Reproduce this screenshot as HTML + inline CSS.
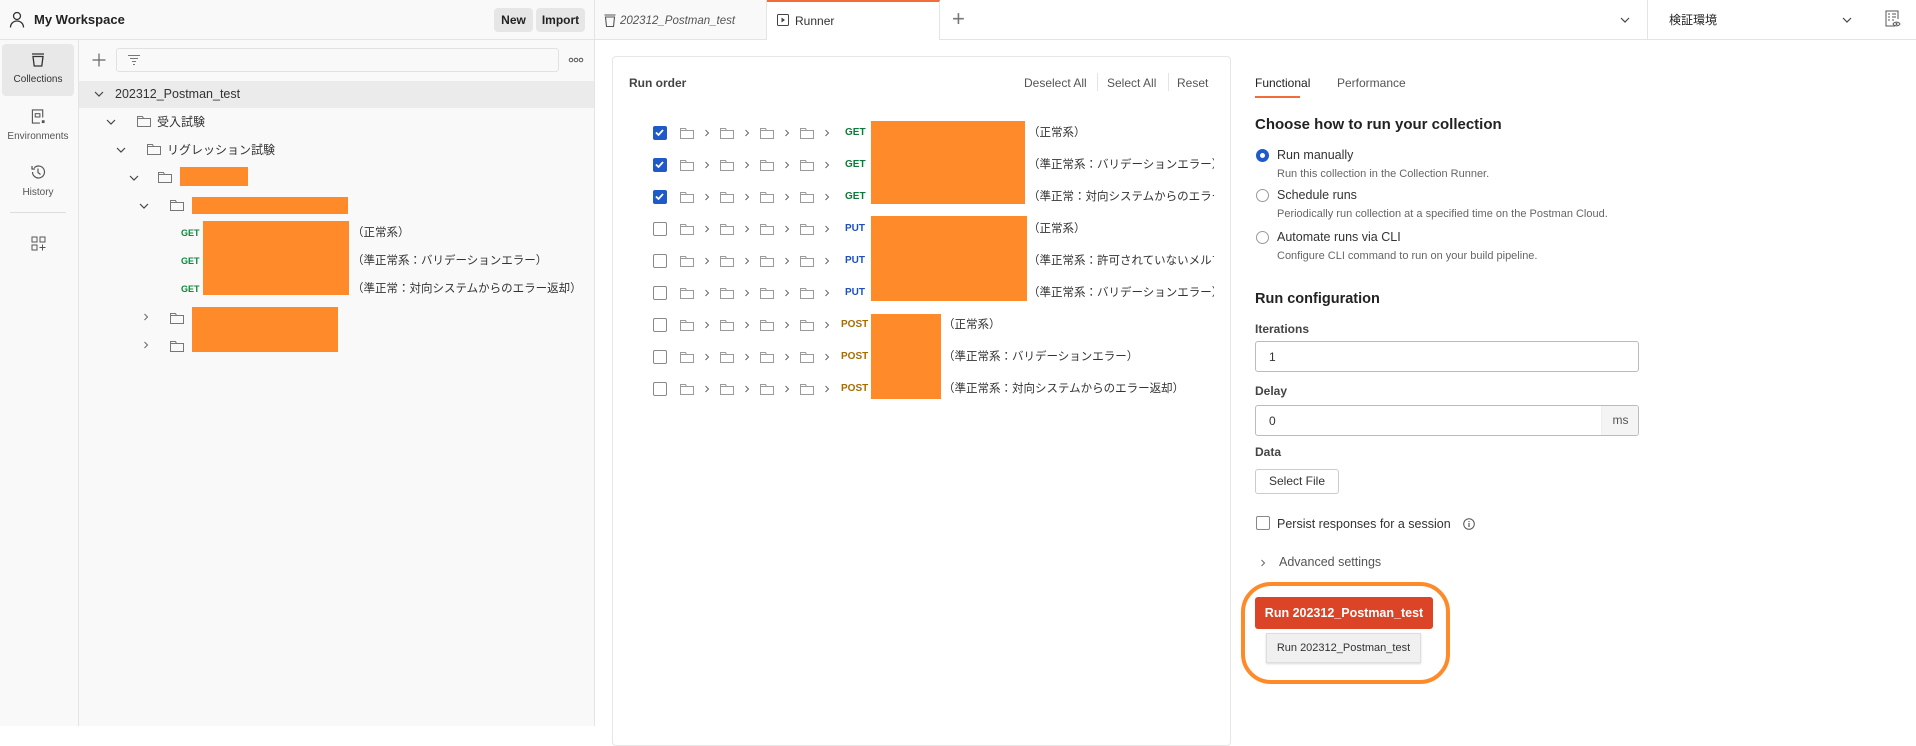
<!DOCTYPE html>
<html><head><meta charset="utf-8"><style>
*{margin:0;padding:0;box-sizing:border-box}
body{width:1916px;height:726px;overflow:hidden;background:#fff;font-family:"Liberation Sans","Noto Sans CJK JP",sans-serif;color:#212121;position:relative}
.a{position:absolute;white-space:nowrap}
.t{line-height:16px}
.or{position:absolute;background:#ff8a2a}
.fold{position:absolute;width:14px;height:12px}
.chev{position:absolute;width:8px;height:8px}
.g{color:#0a8a3a;font-weight:bold;font-size:9px}
.gm{color:#0a7a3a;font-weight:bold;font-size:10px}
.pu{color:#1c4fc0;font-weight:bold;font-size:10px}
.po{color:#a86b00;font-weight:bold;font-size:10px}
.cb{position:absolute;width:14px;height:14px;border:1.5px solid #8a8a8a;border-radius:2px;background:#fff}
.cb.on{background:#2059c8;border-color:#2059c8}
.jp{font-size:11.5px;color:#333}
</style></head><body>
<svg width="0" height="0" style="position:absolute"><defs>
<symbol id="f" viewBox="0 0 14 12"><path d="M0.5 1.5v10h13v-8h-7l-1-2z M0.5 3.5h13" fill="none" stroke="#777" stroke-width="1"/></symbol>
<symbol id="fl" viewBox="0 0 14 12"><path d="M0.5 1.5v10h13v-8h-7l-1-2z M0.5 3.5h13" fill="none" stroke="#9a9a9a" stroke-width="1"/></symbol>
<symbol id="cr" viewBox="0 0 8 8"><path d="M2.5 1l3 3-3 3" fill="none" stroke="#666" stroke-width="1"/></symbol>
<symbol id="cd" viewBox="0 0 10 8"><path d="M1 2l4 4 4-4" fill="none" stroke="#444" stroke-width="1.2"/></symbol>
</defs></svg>

<!-- sidebar -->
<div class="a" style="left:0;top:0;width:595px;height:726px;background:#f9f9f9;border-right:1px solid #e4e4e4"></div>
<div class="a" style="left:0;top:39px;width:595px;height:1px;background:#e4e4e4"></div>
<div class="a" style="left:78px;top:40px;width:1px;height:686px;background:#e4e4e4"></div>
<svg class="a" style="left:9px;top:11px" width="16" height="17" viewBox="0 0 16 17"><circle cx="8" cy="5" r="3.5" fill="none" stroke="#333" stroke-width="1.3"/><path d="M1.5 16.5c0-4 3-6.5 6.5-6.5s6.5 2.5 6.5 6.5" fill="none" stroke="#333" stroke-width="1.3"/></svg>
<div class="a t" style="left:34px;top:12px;font-size:13px;font-weight:bold;color:#222">My Workspace</div>
<div class="a" style="left:494px;top:8px;width:39px;height:24px;background:#e6e6e6;border-radius:4px;font-size:12px;font-weight:bold;line-height:24px;text-align:center;color:#222">New</div>
<div class="a" style="left:536px;top:8px;width:49px;height:24px;background:#e6e6e6;border-radius:4px;font-size:12px;font-weight:bold;line-height:24px;text-align:center;color:#222">Import</div>

<div class="a" style="left:2px;top:44px;width:72px;height:52px;background:#e8e8e8;border-radius:4px"></div>
<svg class="a" style="left:31px;top:53px" width="14" height="14" viewBox="0 0 14 14"><path d="M1 1h12M2 3.5h10l-1.2 9.5H3.2z" fill="none" stroke="#333" stroke-width="1.3"/></svg>
<div class="a t" style="left:0;width:76px;text-align:center;top:72px;font-size:10px;color:#333">Collections</div>
<svg class="a" style="left:31px;top:109px" width="15" height="15" viewBox="0 0 15 16"><path d="M12 9V1H1v14h8" fill="none" stroke="#555" stroke-width="1.2"/><rect x="4" y="5" width="5" height="3.5" fill="none" stroke="#555" stroke-width="1.1"/><rect x="11" y="12" width="3" height="3" fill="#555"/></svg>
<div class="a t" style="left:0;width:76px;text-align:center;top:129px;font-size:10px;color:#555">Environments</div>
<svg class="a" style="left:30px;top:164px" width="16" height="16" viewBox="0 0 16 16"><path d="M2.5 8a6 6 0 1 0 1.8-4.3" fill="none" stroke="#555" stroke-width="1.2"/><path d="M2 2v3h3M8 4.5v4l2.5 2" fill="none" stroke="#555" stroke-width="1.2"/></svg>
<div class="a t" style="left:0;width:76px;text-align:center;top:185px;font-size:10px;color:#555">History</div>
<div class="a" style="left:10px;top:212px;width:56px;height:1px;background:#ddd"></div>
<svg class="a" style="left:31px;top:236px" width="15" height="15" viewBox="0 0 15 15"><rect x="1" y="1" width="5" height="5" fill="none" stroke="#555"/><rect x="9" y="1" width="5" height="5" fill="none" stroke="#555"/><rect x="1" y="9" width="5" height="5" fill="none" stroke="#555"/><path d="M11.5 8.5v6M8.5 11.5h6" stroke="#555"/></svg>

<svg class="a" style="left:92px;top:53px" width="14" height="14" viewBox="0 0 14 14"><path d="M7 0.5v13M0.5 7h13" stroke="#666" stroke-width="1.2"/></svg>
<div class="a" style="left:116px;top:48px;width:443px;height:24px;border:1px solid #e2e2e2;border-radius:3px;background:#f9f9f9"></div>
<svg class="a" style="left:127px;top:54px" width="14" height="12" viewBox="0 0 14 12"><path d="M1 1.5h12M3 4.5h8M5 7.5h4M6 10.5h2" stroke="#777"/></svg>
<svg class="a" style="left:568px;top:57px" width="16" height="6" viewBox="0 0 16 6"><circle cx="3" cy="3" r="1.8" fill="none" stroke="#555"/><circle cx="8" cy="3" r="1.8" fill="none" stroke="#555"/><circle cx="13" cy="3" r="1.8" fill="none" stroke="#555"/></svg>

<div class="a" style="left:79px;top:81px;width:515px;height:27px;background:#ebebeb"></div>
<svg class="a" style="left:94px;top:90px" width="10" height="8"><use href="#cd"/></svg>
<div class="a t" style="left:115px;top:86px;font-size:12.5px;color:#333">202312_Postman_test</div>

<svg class="a" style="left:106px;top:118px" width="10" height="8"><use href="#cd"/></svg>
<svg class="fold" style="left:137px;top:115px"><use href="#f"/></svg>
<div class="a t jp" style="left:157px;top:114px;font-size:12px">受入試験</div>

<svg class="a" style="left:116px;top:146px" width="10" height="8"><use href="#cd"/></svg>
<svg class="fold" style="left:147px;top:143px"><use href="#f"/></svg>
<div class="a t jp" style="left:167px;top:142px;font-size:12px">リグレッション試験</div>

<svg class="a" style="left:129px;top:174px" width="10" height="8"><use href="#cd"/></svg>
<svg class="fold" style="left:158px;top:171px"><use href="#f"/></svg>
<div class="or" style="left:180px;top:167px;width:68px;height:19px"></div>

<svg class="a" style="left:139px;top:202px" width="10" height="8"><use href="#cd"/></svg>
<svg class="fold" style="left:170px;top:199px"><use href="#f"/></svg>
<div class="or" style="left:192px;top:197px;width:156px;height:17px"></div>

<div class="a t g" style="left:181px;top:225px">GET</div>
<div class="a t g" style="left:181px;top:253px">GET</div>
<div class="a t g" style="left:181px;top:281px">GET</div>
<div class="or" style="left:203px;top:221px;width:146px;height:74px"></div>
<div class="a t jp" style="left:352px;top:225px">（正常系）</div>
<div class="a t jp" style="left:352px;top:253px">（準正常系：バリデーションエラー）</div>
<div class="a t jp" style="left:352px;top:281px">（準正常：対向システムからのエラー返却）</div>

<svg class="a" style="left:142px;top:313px" width="8" height="8"><use href="#cr"/></svg>
<svg class="fold" style="left:170px;top:312px"><use href="#f"/></svg>
<svg class="a" style="left:142px;top:341px" width="8" height="8"><use href="#cr"/></svg>
<svg class="fold" style="left:170px;top:340px"><use href="#f"/></svg>
<div class="or" style="left:192px;top:307px;width:146px;height:45px"></div>

<!-- tabs -->
<div class="a" style="left:595px;top:39px;width:1321px;height:1px;background:#e4e4e4"></div>
<div class="a" style="left:595px;top:0;width:172px;height:39px;background:#f9f9f9;border-right:1px solid #e4e4e4"></div>
<svg class="a" style="left:604px;top:14px" width="12" height="13" viewBox="0 0 12 13"><path d="M0.5 1h11M1.5 3h9l-1 9.5h-7z" fill="none" stroke="#555" stroke-width="1.1"/></svg>
<div class="a t" style="left:620px;top:13px;font-size:11.5px;font-style:italic;color:#555">202312_Postman_test</div>
<div class="a" style="left:767px;top:0;width:173px;height:40px;background:#fff;border-right:1px solid #e4e4e4;border-top:2px solid #f26b3a"></div>
<svg class="a" style="left:777px;top:14px" width="12" height="12" viewBox="0 0 12 12"><rect x="0.5" y="0.5" width="11" height="11" rx="1" fill="none" stroke="#444"/><path d="M4.5 3.5v5l3.5-2.5z" fill="#444"/></svg>
<div class="a t" style="left:795px;top:13px;font-size:12px;color:#333">Runner</div>
<div class="a" style="left:952px;top:6px;font-size:22px;line-height:26px;color:#777;font-weight:300">+</div>
<svg class="a" style="left:1620px;top:16px" width="10" height="8"><use href="#cd"/></svg>
<div class="a" style="left:1647px;top:0;width:1px;height:39px;background:#e4e4e4"></div>
<div class="a t" style="left:1669px;top:12px;font-size:12px;color:#222">検証環境</div>
<svg class="a" style="left:1842px;top:16px" width="10" height="8"><use href="#cd"/></svg>
<svg class="a" style="left:1885px;top:10px" width="16" height="18" viewBox="0 0 16 18"><path d="M10 16H1V1h12v8" fill="none" stroke="#555"/><path d="M3 4h2M7 4h4M3 7h2M7 7h4M3 10h2M7 10h2" stroke="#555"/><path d="M8 14c1.5-2.5 5.5-2.5 7 0c-1.5 2.5-5.5 2.5-7 0z" fill="none" stroke="#555"/><circle cx="11.5" cy="14" r="1" fill="#555"/></svg>

<!-- runner card -->
<div class="a" style="left:612px;top:56px;width:619px;height:690px;border:1px solid #e6e6e6;border-radius:4px"></div>
<div class="a t" style="left:629px;top:75px;font-size:12px;font-weight:bold;color:#444">Run order</div>
<div class="a t" style="left:1024px;top:75px;font-size:12px;color:#555">Deselect All</div>
<div class="a" style="left:1097px;top:73px;width:1px;height:18px;background:#e4e4e4"></div>
<div class="a t" style="left:1107px;top:75px;font-size:12px;color:#555">Select All</div>
<div class="a" style="left:1168px;top:73px;width:1px;height:18px;background:#e4e4e4"></div>
<div class="a t" style="left:1177px;top:75px;font-size:12px;color:#555">Reset</div>

<div id="rows"></div>
<div class="or" style="left:871px;top:121px;width:154px;height:83px"></div>
<div class="or" style="left:871px;top:216px;width:156px;height:85px"></div>
<div class="or" style="left:871px;top:314px;width:70px;height:85px"></div>

<!-- right panel -->
<div class="a t" style="left:1255px;top:75px;font-size:12px;color:#222">Functional</div>
<div class="a" style="left:1255px;top:96px;width:45px;height:2px;background:#f26b3a"></div>
<div class="a t" style="left:1337px;top:75px;font-size:12px;color:#555">Performance</div>
<div class="a" style="left:1255px;top:115px;font-size:15px;line-height:20px;font-weight:bold;color:#222">Choose how to run your collection</div>
<div class="a" style="left:1256px;top:149px;width:13px;height:13px;border-radius:50%;border:4px solid #2059c8;background:#fff"></div>
<div class="a t" style="left:1277px;top:147px;font-size:12.5px;color:#333">Run manually</div>
<div class="a t" style="left:1277px;top:166px;font-size:11px;color:#666">Run this collection in the Collection Runner.</div>
<div class="a" style="left:1256px;top:189px;width:13px;height:13px;border-radius:50%;border:1px solid #999;background:#fff"></div>
<div class="a t" style="left:1277px;top:187px;font-size:12.5px;color:#333">Schedule runs</div>
<div class="a t" style="left:1277px;top:206px;font-size:11px;color:#666">Periodically run collection at a specified time on the Postman Cloud.</div>
<div class="a" style="left:1256px;top:231px;width:13px;height:13px;border-radius:50%;border:1px solid #999;background:#fff"></div>
<div class="a t" style="left:1277px;top:229px;font-size:12.5px;color:#333">Automate runs via CLI</div>
<div class="a t" style="left:1277px;top:248px;font-size:11px;color:#666">Configure CLI command to run on your build pipeline.</div>

<div class="a" style="left:1255px;top:289px;font-size:14.5px;line-height:20px;font-weight:bold;color:#222">Run configuration</div>
<div class="a t" style="left:1255px;top:321px;font-size:12px;font-weight:bold;color:#444">Iterations</div>
<div class="a" style="left:1255px;top:341px;width:384px;height:31px;border:1px solid #bbb;border-radius:3px"></div>
<div class="a t" style="left:1269px;top:349px;font-size:12px;color:#333">1</div>
<div class="a t" style="left:1255px;top:383px;font-size:12px;font-weight:bold;color:#444">Delay</div>
<div class="a" style="left:1255px;top:405px;width:384px;height:31px;border:1px solid #bbb;border-radius:3px;overflow:hidden"><div style="position:absolute;left:345px;top:0;width:38px;height:31px;background:#f4f4f4;border-left:1px solid #eee;font-size:12px;line-height:29px;text-align:center;color:#555">ms</div></div>
<div class="a t" style="left:1269px;top:413px;font-size:12px;color:#333">0</div>
<div class="a t" style="left:1255px;top:444px;font-size:12px;font-weight:bold;color:#444">Data</div>
<div class="a" style="left:1255px;top:469px;width:84px;height:25px;border:1px solid #ccc;border-radius:3px;font-size:12px;line-height:23px;text-align:center;color:#333">Select File</div>
<div class="cb" style="left:1256px;top:516px;border-width:1px;border-color:#888"></div>
<div class="a t" style="left:1277px;top:516px;font-size:12.5px;color:#333">Persist responses for a session</div>
<svg class="a" style="left:1463px;top:518px" width="12" height="12" viewBox="0 0 12 12"><circle cx="6" cy="6" r="5.3" fill="none" stroke="#555"/><path d="M6 5v4M6 3v1" stroke="#555" stroke-width="1.2"/></svg>
<svg class="a" style="left:1259px;top:559px" width="8" height="8"><use href="#cr"/></svg>
<div class="a t" style="left:1279px;top:554px;font-size:12.5px;color:#555">Advanced settings</div>

<div class="a" style="left:1241px;top:582px;width:209px;height:102px;border:4px solid #ff8a2a;border-radius:30px"></div>
<div class="a" style="left:1255px;top:597px;width:178px;height:32px;background:#dc4428;border-radius:3px;color:#fff;font-size:12.5px;font-weight:bold;line-height:32px;text-align:center">Run 202312_Postman_test</div>
<div class="a" style="left:1266px;top:633px;width:155px;height:30px;background:#f0f0f0;border:1px solid #ddd;box-shadow:0 1px 2px rgba(0,0,0,.15);font-size:11px;line-height:28px;text-align:center;color:#333">Run 202312_Postman_test</div>

<script>
var ys=[133,165,197,229,261,293,325,357,389];
var m=[["GET","gm"],["GET","gm"],["GET","gm"],["PUT","pu"],["PUT","pu"],["PUT","pu"],["POST","po"],["POST","po"],["POST","po"]];
var tx=["（正常系）","（準正常系：バリデーションエラー）","（準正常：対向システムからのエラー返却）","（正常系）","（準正常系：許可されていないメルマガI","（準正常系：バリデーションエラー）","（正常系）","（準正常系：バリデーションエラー）","（準正常系：対向システムからのエラー返却）"];
var h="";
for(var i=0;i<9;i++){var y=ys[i];
h+='<div class="cb'+(i<3?' on':'')+'" style="left:653px;top:'+(y-7)+'px">'+(i<3?'<svg width="11" height="11" style="position:absolute;left:0;top:0" viewBox="0 0 11 11"><path d="M2 5.5l2.5 2.5 4.5-5" fill="none" stroke="#fff" stroke-width="1.8"/></svg>':'')+'</div>';
for(var k=0;k<4;k++){h+='<svg class="fold" style="left:'+(680+40*k)+'px;top:'+(y-6)+'px"><use href="#fl"/></svg><svg class="chev" style="left:'+(703+40*k)+'px;top:'+(y-4)+'px"><use href="#cr"/></svg>';}
h+='<div class="a t '+m[i][1]+'" style="left:'+(m[i][0]=="POST"?841:845)+'px;top:'+(y-8)+'px">'+m[i][0]+'</div>';
var x=i<6?1028:943;
h+='<div class="a t jp" style="left:'+x+'px;top:'+(y-8)+'px;max-width:'+(1214-x)+'px;overflow:hidden">'+tx[i]+'</div>';}
document.getElementById("rows").innerHTML=h;
</script>
</body></html>
